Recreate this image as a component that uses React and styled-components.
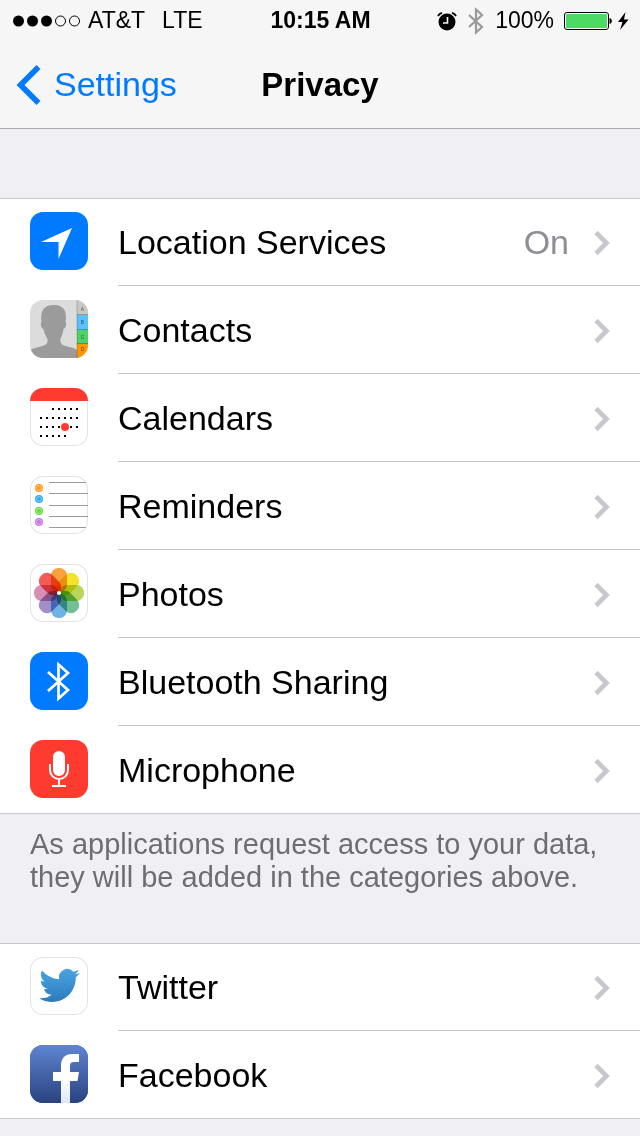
import styled, { createGlobalStyle } from "styled-components";

const GlobalStyle = createGlobalStyle`
body {
  margin: 0;
  background-color: #efeff4;
  font-family: "Liberation Sans", Arial, sans-serif;
  color: #000;
}
`;

const Header = styled.header`
background-color: #f6f6f6;
border-bottom: 1px solid #a9a9ac;
`;

const StatusBar = styled.div`
display: grid;
grid-template-columns: 1fr auto 1fr;
align-items: center;
height: 41px;
padding: 0 11px 0 12px;
font-size: 23px;
`;

const StatusGroup = styled.div`
display: flex;
align-items: center;
gap: ${(props) => props.gap};
justify-content: ${(props) => (props.$end ? "flex-end" : "flex-start")};
`;

const Carrier = styled.span`
margin-right: 10px;
`;

const Clock = styled.span`
font-weight: 700;
`;

const NavBar = styled.nav`
display: grid;
grid-template-columns: 1fr auto 1fr;
align-items: center;
height: 87px;
padding: 0 16px;
font-size: 34px;
`;

const BackLink = styled.a`
display: flex;
align-items: center;
gap: 12px;
color: #007aff;
text-decoration: none;
`;

const Title = styled.h1`
margin: 0;
font-size: 33px;
font-weight: 700;
`;

const Main = styled.main`
padding: 69px 0 17px;
`;

const Group = styled.ul`
list-style: none;
margin: 0;
padding: 0;
background-color: #fff;
border-bottom: 1px solid #c8c7cc;
`;

const Item = styled.li`
&:first-child {
  border-top: 1px solid #c8c7cc;
}
`;

const RowLink = styled.a`
display: flex;
align-items: flex-start;
gap: 30px;
padding-left: 30px;
color: #000;
text-decoration: none;
font-size: 34px;
`;

const RowBody = styled.span`
flex: 1;
display: flex;
align-items: center;
box-sizing: border-box;
height: 88px;
padding: 2px 30px 0 0;
border-bottom: 1px solid #c8c7cc;
${Item}:first-child & {
  height: 87px;
  padding-top: 1px;
}
${Item}:last-child & {
  height: 87px;
  border-bottom: none;
}
`;

const Label = styled.span`
flex: 1;
`;

const Value = styled.span`
color: #8e8e93;
margin-right: 25px;
`;

const Note = styled.p`
box-sizing: border-box;
min-height: 129px;
margin: 0;
padding: 14px 24px 14px 30px;
color: #6d6d72;
font-size: 29px;
line-height: 33px;
`;

const Tile = styled.svg`
display: block;
flex: none;
width: 58px;
height: 58px;
margin-top: 14px;
border-radius: 13px;
background-color: ${(props) => props.color || "#fff"};
box-shadow: ${(props) => (props.color ? "none" : "0 0 0 1px #e3e3e5 inset")};
${Item}:first-child & {
  margin-top: 13px;
}
`;

const Glyph = styled.svg`
display: block;
flex: none;
`;

const LocationIcon = () => (
  <Tile viewBox="0 0 58 58" color="#007aff">
    <path d="M11 30 42 16 28.500 47V30Z" fill="#fff" />
  </Tile>
);

const tabs = [
  { letter: "A", y: 0, h: 15, color: "#c9c8c4" },
  { letter: "B", y: 15, h: 15, color: "#5ac1fb" },
  { letter: "C", y: 30, h: 14, color: "#4cd265" },
  { letter: "D", y: 44, h: 14, color: "#ff9500" },
];

const ContactsIcon = () => (
  <Tile viewBox="0 0 58 58" color="#dcdcdc">
    <path
      d="M0 58V50C4 47.500 10 47 14 45.500 17 44.500 18 42.500 17.500 39 15.500 36 14 32 13.500 29 11 28 10 23.500 11.500 22 10 12 13 5 24 5 34 5 37.500 12 35.500 22 37 23.500 36 28 33.500 29 33 32 32 36 30.500 39 30 42.500 31 44.500 34 45.500 38 47 44 47.500 47 50V58Z"
      fill="#9b9b9b"
    />
    {tabs.map((t) => (
      <g key={t.letter}>
        <rect x="47" y={t.y} width="11" height={t.h} fill={t.color} />
        <rect x="47" y={t.y + t.h - 1} width="11" height="1" fill="#000" opacity=".25" />
        <text x="52.500" y={t.y === 0 ? 11 : t.y + (t.y === 44 ? 7 : 9)} fontSize="5" textAnchor="middle" fill="#000" opacity=".6">
          {t.letter}
        </text>
      </g>
    ))}
    <rect x="46.500" width="1" height="58" fill="#000" opacity=".2" />
  </Tile>
);

// each entry: y, first column, last column
const weeks = [
  [21, 2, 6],
  [30, 0, 6],
  [39, 0, 6],
  [48, 0, 4],
];

const CalendarIcon = () => (
  <Tile viewBox="0 0 58 58">
    <rect width="58" height="13" fill="#ff3b30" />
    {weeks.map(([y, from, to]) =>
      Array.from({ length: to - from + 1 }, (_, i) => (
        <rect key={`${y}-${i}`} x={10 + (from + i) * 6} y={y - 1} width="2" height="2" />
      ))
    )}
    <circle cx="35" cy="39" r="4" fill="#ff3b30" />
  </Tile>
);

const RemindersIcon = () => (
  <Tile viewBox="0 0 58 58">
    {[6, 17, 29, 40, 51].map((y) => (
      <rect key={y} x="19" y={y} width={y === 6 || y === 51 ? 37 : 39} height="1" fill="#9a9a9a" />
    ))}
    {[
      [12, "#ff9a1f"],
      [23, "#2fa9f5"],
      [35, "#66db3f"],
      [46, "#cc73e1"],
    ].map(([y, c]) => (
      <g key={y}>
        <circle cx="9" cy={y} r="4" fill={c} />
        <circle cx="9" cy={y} r="2.500" fill="none" stroke="#fff" strokeWidth=".8" opacity=".5" />
      </g>
    ))}
  </Tile>
);

const Petal = styled.rect`
mix-blend-mode: multiply;
`;

const petals = ["#f9a13a", "#f3e32b", "#b9d657", "#72bf92", "#6fb4e6", "#a18fca", "#d68fb4", "#f35b55"];

const PhotosIcon = () => (
  <Tile viewBox="0 0 58 58">
    {petals.map((c, i) => (
      <Petal key={c} x="21" y="4" width="16" height="24.500" rx="7.500" fill={c} transform={`rotate(${i * 45} 29 29)`} />
    ))}
    <circle cx="29" cy="29" r="2" fill="#fff" />
  </Tile>
);

const BluetoothIcon = () => (
  <Tile viewBox="0 0 58 58" color="#007aff">
    <path d="M18 20 38 38 28.500 46.500V12.500L38 21 18 39" fill="none" stroke="#fff" strokeWidth="2.700" />
  </Tile>
);

const MicrophoneIcon = () => (
  <Tile viewBox="0 0 58 58" color="#ff3b30">
    <rect x="23" y="11" width="12" height="25" rx="6" fill="#fff" />
    <path d="M20 24V30A9 9 0 0 0 38 30V24M29 39V46M22 46H36" fill="none" stroke="#fff" strokeWidth="2" />
  </Tile>
);

const TwitterIcon = () => (
  <Tile viewBox="0 0 58 58">
    <defs>
      <linearGradient id="bird" x1="0" y1="0" x2="0" y2="1">
        <stop offset="0" stopColor="#4ba3e0" />
        <stop offset="1" stopColor="#2b7bbd" />
      </linearGradient>
    </defs>
    <path
      transform="translate(9.300 8.200) scale(1.690)"
      fill="url(#bird)"
      d="M23.953 4.570a10 10 0 01-2.825.775 4.958 4.958 0 002.163-2.723c-.951.555-2.005.959-3.127 1.184a4.920 4.920 0 00-8.384 4.482C7.690 8.095 4.067 6.130 1.640 3.162a4.822 4.822 0 00-.666 2.475c0 1.710.870 3.213 2.188 4.096a4.904 4.904 0 01-2.228-.616v.060a4.923 4.923 0 003.946 4.827 4.996 4.996 0 01-2.212.085 4.936 4.936 0 004.604 3.417 9.867 9.867 0 01-6.102 2.105c-.390 0-.779-.023-1.170-.067a13.995 13.995 0 007.557 2.209c9.053 0 13.998-7.496 13.998-13.985 0-.210 0-.420-.015-.630A9.935 9.935 0 0024 4.590z"
    />
  </Tile>
);

const FacebookIcon = () => (
  <Tile viewBox="0 0 58 58" color="#3b5998">
    <defs>
      <linearGradient id="fbTile" x1="0" y1="0" x2="0" y2="1">
        <stop offset="0" stopColor="#5f85d2" />
        <stop offset="1" stopColor="#29437f" />
      </linearGradient>
      <linearGradient id="fbMark" x1="0" y1="0" x2="0" y2="1">
        <stop offset=".5" stopColor="#fff" />
        <stop offset="1" stopColor="#dfe6f3" />
      </linearGradient>
    </defs>
    <rect width="58" height="58" fill="url(#fbTile)" />
    <path d="M31 58V36H23V27H31V21C31 13 35 9 42 9H49V17H44C41 17 40 18.500 40 21V27H49L47.500 36H40V58Z" fill="url(#fbMark)" />
  </Tile>
);

const Chevron = () => (
  <Glyph width="16" height="26" viewBox="0 0 16 26" aria-hidden="true">
    <path d="M2 2.500 12.500 13 2 23.500" fill="none" stroke="#c7c7cc" strokeWidth="4.600" />
  </Glyph>
);

const BackChevron = () => (
  <Glyph width="26" height="42" viewBox="0 0 26 42" aria-hidden="true">
    <path d="M22.500 3 4.500 21 22.500 39" fill="none" stroke="#007aff" strokeWidth="5.600" />
  </Glyph>
);

const Signal = () => (
  <Glyph width="69" height="12" viewBox="0 0 69 12" aria-hidden="true">
    {[0, 1, 2, 3, 4].map((i) => (
      <circle key={i} cx={6.5 + i * 14} cy="6" r={i < 3 ? 5.5 : 5} fill={i < 3 ? "#000" : "none"} stroke={i < 3 ? "none" : "#000"} />
    ))}
  </Glyph>
);

const Alarm = () => (
  <Glyph width="20" height="20" viewBox="0 0 20 20" aria-hidden="true">
    <circle cx="10" cy="11" r="8.500" />
    <path d="M1 5A6 6 0 0 1 5 1.800M15 1.800A6 6 0 0 1 19 5" fill="none" stroke="#000" strokeWidth="1.800" />
    <path d="M10.500 6V12H6" fill="none" stroke="#f6f6f6" strokeWidth="1.600" />
  </Glyph>
);

const StatusBluetooth = () => (
  <Glyph width="18" height="28" viewBox="0 0 18 28" aria-hidden="true">
    <path d="M2 8 15 20 9 25.500V2.500L15 8 2 20" fill="none" stroke="#9a9a9a" strokeWidth="2.200" />
  </Glyph>
);

const Battery = () => (
  <Glyph width="65" height="20" viewBox="0 0 65 20" aria-hidden="true">
    <rect x=".5" y="1.500" width="44" height="17" rx="2.500" fill="#fff" stroke="#000" />
    <rect x="2" y="3" width="41" height="14" rx="1" fill="#4cd964" />
    <path d="M46 7.500A3 3 0 0 1 46 12.500Z" stroke="#000" />
    <path d="M61.500 1 54 11H58.500L56 19 64.500 8.500H60Z" />
  </Glyph>
);

const dataRows = [
  { label: "Location Services", value: "On", Icon: LocationIcon },
  { label: "Contacts", Icon: ContactsIcon },
  { label: "Calendars", Icon: CalendarIcon },
  { label: "Reminders", Icon: RemindersIcon },
  { label: "Photos", Icon: PhotosIcon },
  { label: "Bluetooth Sharing", Icon: BluetoothIcon },
  { label: "Microphone", Icon: MicrophoneIcon },
];

const socialRows = [
  { label: "Twitter", Icon: TwitterIcon },
  { label: "Facebook", Icon: FacebookIcon },
];

const SettingsGroup = ({ rows }) => (
  <Group>
    {rows.map(({ label, value, Icon }) => (
      <Item key={label}>
        <RowLink href="#">
          <Icon />
          <RowBody>
            <Label>{label}</Label>
            {value && <Value>{value}</Value>}
            <Chevron />
          </RowBody>
        </RowLink>
      </Item>
    ))}
  </Group>
);

const App = () => {
  return (
    <>
      <GlobalStyle />
      <Header>
        <StatusBar>
          <StatusGroup gap="7px">
            <Signal />
            <Carrier>AT&amp;T</Carrier>
            <span>LTE</span>
          </StatusGroup>
          <Clock>10:15 AM</Clock>
          <StatusGroup gap="10px" $end>
            <Alarm />
            <StatusBluetooth />
            <span>100%</span>
            <Battery />
          </StatusGroup>
        </StatusBar>
        <NavBar>
          <BackLink href="#">
            <BackChevron />
            Settings
          </BackLink>
          <Title>Privacy</Title>
        </NavBar>
      </Header>
      <Main>
        <SettingsGroup rows={dataRows} />
        <Note>As applications request access to your data, they will be added in the categories above.</Note>
        <SettingsGroup rows={socialRows} />
      </Main>
    </>
  );
};

export default App;
